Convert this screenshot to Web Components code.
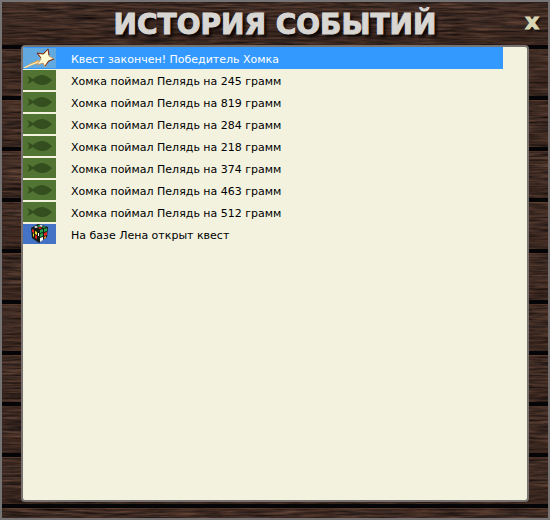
<!DOCTYPE html>
<html lang="ru">
<head>
<meta charset="utf-8">
<title>История событий</title>
<style>
html, body { height: 100%; margin: 0; }
body { font: 11px/22px "DejaVu Sans", Verdana, sans-serif; color: #000; }
</style>
</head>
<body>
<wood-window>
  <window-title slot="header">ИСТОРИЯ СОБЫТИЙ</window-title>
  <event-list>
    <event-row icon="star" selected>Квест закончен! Победитель Хомка</event-row>
    <event-row icon="fish">Хомка поймал Пелядь на 245 грамм</event-row>
    <event-row icon="fish">Хомка поймал Пелядь на 819 грамм</event-row>
    <event-row icon="fish">Хомка поймал Пелядь на 284 грамм</event-row>
    <event-row icon="fish">Хомка поймал Пелядь на 218 грамм</event-row>
    <event-row icon="fish">Хомка поймал Пелядь на 374 грамм</event-row>
    <event-row icon="fish">Хомка поймал Пелядь на 463 грамм</event-row>
    <event-row icon="fish">Хомка поймал Пелядь на 512 грамм</event-row>
    <event-row icon="cube">На базе Лена открыт квест</event-row>
  </event-list>
</wood-window>
<script>
const icons = {
  star: `<rect width="33" height="20" fill="#62a9df"/>
    <path d="M0 20Q8 15 15 12L19 15Q9 16 3 20Z" fill="#e0a550"/><path d="M1 20Q9 16 18 13" stroke="#fff1bd" stroke-width="1.2" fill="none"/>
    <path d="M15 5L21 6L25 1L26 8L31 11L25 13L22 19L20 15L14 17L18 11Z" fill="#fffbd5" stroke="#c98a4a" stroke-width=".8"/>
    <path d="M18 10L14 5L20 6L25 1L26 7M31 11L26 13L22 18" fill="none" stroke="#75291b" stroke-width="1"/>`,
  fish: `<rect width="33" height="20" fill="#517433"/>
    <path d="M4 6Q7 7 10 9Q14 5 20 5Q25 6 29 10Q25 15 19 15Q14 15 10 11Q7 13 4 14Q6 12 6 10Q6 8 4 6Z" fill="#344e1f"/>`,
  cube: `<rect width="33" height="20" fill="#4472c4"/>
    <path d="M8 4L15 0L25 3L24 13L16 19L9 14Z" fill="#141c14"/>
    <path d="M11 3L13 2L15 3L13 4ZM16 1L18 1L20 2L18 3Z" fill="#fff"/>
    <path d="M14 2L16 1L18 2L16 3ZM19 3L21 2L23 3L21 4Z" fill="#27a24a"/>
    <path d="M9 5L11 6V9L9 8ZM12 11L14 12V15L12 14ZM21 9L24 8V11L21 12ZM15 4L17 3L19 4L17 5Z" fill="#e92222"/>
    <path d="M12 7L14 8V11L12 10ZM10 9L11 10V13L10 12Z" fill="#f0df20"/>
    <path d="M17 6L20 5V8L17 9ZM21 5L24 4V7L21 8ZM17 10L20 9V12L17 13Z" fill="#27a24a"/>
    <path d="M17 14L20 13V16L17 18ZM15 9L16 9V12L15 12Z" fill="#fff"/><path d="M21 13L23 12V14L21 15Z" fill="#f28a20"/>`
};

class WoodWindow extends HTMLElement {
  constructor() {
    super();
    this.attachShadow({ mode: "open" }).innerHTML = `
      <style>
        :host { display: grid; box-sizing: border-box; height: 100%; border: 2px solid #777475; background: #38261f; overflow: hidden; }
        .wood, .frame { grid-area: 1 / 1; min-width: 0; min-height: 0; }
        .wood { width: 100%; height: 100%; }
        .frame { display: grid; grid-template-rows: 43px minmax(0, 1fr); padding: 0 19px 16px; z-index: 1; }
        header { display: grid; grid-template-columns: 1fr auto 1fr; align-items: center; margin: 0 -13px; }
        slot[name] { display: block; grid-column: 2; }
        button { justify-self: end; width: 20px; height: 32px; padding: 0 0 4px; border: 0; background: none; color: #d8d5b4; font: 900 22px/28px "DejaVu Sans", sans-serif; -webkit-text-stroke: 1px #d8d5b4; text-shadow: 2px 2px 2px #120b08; cursor: pointer; }
        main { border: 2px solid #777170; border-radius: 4px; background: #f3f2df; overflow: auto; }
      </style>
      <svg class="wood" aria-hidden="true">
        <defs>
          <filter id="grain" x="0" y="0" width="100%" height="100%" color-interpolation-filters="sRGB">
            <feTurbulence type="fractalNoise" baseFrequency="0.03 0.45" numOctaves="4" seed="8"/>
            <feColorMatrix values=".36 .16 0 0 -.02  .23 .14 0 0 -.02  .16 .13 0 0 -.01  0 0 0 0 1"/>
          </filter>
          <pattern id="gaps" width="100" height="51" y="43" patternUnits="userSpaceOnUse">
            <rect width="100" height="4" fill="#050508"/><rect y="4" width="100" height="1" fill="#7a4b30" opacity=".35"/>
            <rect y="36" width="100" height="15" fill="#1a0c08" opacity=".15"/>
          </pattern>
        </defs>
        <rect width="100%" height="100%" filter="url(#grain)"/>
        <rect width="100%" height="100%" fill="url(#gaps)"/>
      </svg>
      <div class="frame">
        <header><slot name="header"></slot><button type="button" aria-label="Закрыть">x</button></header>
        <main><slot></slot></main>
      </div>`;
  }
}
class WindowTitle extends HTMLElement {
  constructor() {
    super();
    this.attachShadow({ mode: "open" }).innerHTML = `
      <style>
        :host { display: block; }
        h1 { margin: 0; padding-top: 3px; color: #d8d6d2; font: 900 28px/40px "DejaVu Sans", sans-serif; white-space: nowrap; -webkit-text-stroke: 1px #d8d6d2; text-shadow: 3px 3px 3px #0c0706; }
      </style><h1><slot></slot></h1>`;
  }
}
class EventList extends HTMLElement {
  constructor() {
    super();
    this.attachShadow({ mode: "open" }).innerHTML = `
      <style>:host { display: flex; flex-direction: column; padding-right: 24px; }</style><slot></slot>`;
    this.setAttribute("role", "list");
  }
}
class EventRow extends HTMLElement {
  connectedCallback() {
    if (this.shadowRoot) return;
    this.setAttribute("role", "listitem");
    this.attachShadow({ mode: "open" }).innerHTML = `
      <style>
        :host { display: flex; align-items: center; gap: 15px; height: 22px; white-space: nowrap; }
        :host([selected]) { background: #3399ff; color: #fff; }
        svg { flex: none; width: 33px; height: 20px; }
        span { padding-top: 4px; }
      </style>
      <svg viewBox="0 0 33 20" aria-hidden="true">${icons[this.getAttribute("icon")]}</svg><span><slot></slot></span>`;
  }
}
customElements.define("wood-window", WoodWindow);
customElements.define("window-title", WindowTitle);
customElements.define("event-list", EventList);
customElements.define("event-row", EventRow);
</script>
</body>
</html>
